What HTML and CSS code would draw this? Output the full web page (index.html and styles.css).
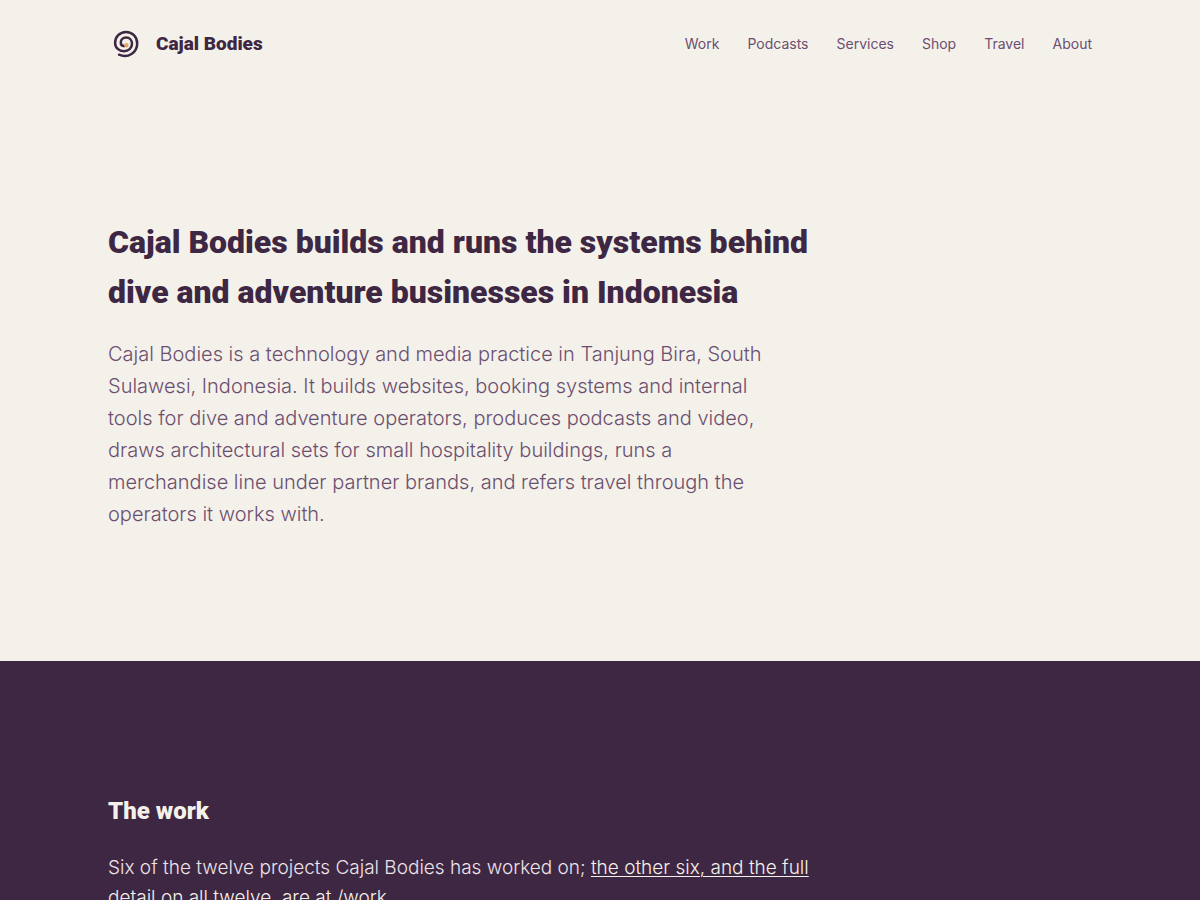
FILE: index.html
```html
<!DOCTYPE html>
<html lang="en">
<head>
  <meta charset="utf-8">
  <meta name="viewport" content="width=device-width, initial-scale=1">
  <title>Cajal Bodies</title>
  <link rel="stylesheet" href="styles.css">
</head>
<body>
  <header class="site-header">
    <a class="brand" href="#">
      <svg class="brand-mark" viewBox="0 0 36 36" aria-hidden="true">
        <path d="M11 29.7C20 33.8 29.2 27.5 29.2 18.4C29.2 11.8 24.2 7 18 7C11.8 7 7.1 11.8 7.1 17.7C7.1 22.9 11.2 26.2 15.8 26.2C20.6 26.2 24 23 24 18.7C24 15 21.5 12.6 18.1 12.6C15 12.6 12.8 14.7 12.8 17.4C12.8 19.5 14.1 21 16 21.1" fill="none" stroke="#3e2743" stroke-width="2.5" stroke-linecap="round"/>
        <circle cx="18.4" cy="20.2" r="2.2" fill="#e9a568"/>
      </svg>
      <span class="brand-name">Cajal Bodies</span>
    </a>
    <nav class="site-nav" aria-label="Main">
      <a href="#">Work</a>
      <a href="#">Podcasts</a>
      <a href="#">Services</a>
      <a href="#">Shop</a>
      <a href="#">Travel</a>
      <a href="#">About</a>
    </nav>
  </header>
  <main>
    <section class="hero">
      <h1>Cajal Bodies builds and runs the systems behind dive and adventure businesses in Indonesia</h1>
      <p>Cajal Bodies is a technology and media practice in Tanjung Bira, South Sulawesi, Indonesia. It builds websites, booking systems and internal tools for dive and adventure operators, produces podcasts and video, draws architectural sets for small hospitality buildings, runs a merchandise line under partner brands, and refers travel through the operators it works with.</p>
    </section>
    <section class="work">
      <h2>The work</h2>
      <p>Six of the twelve projects Cajal Bodies has worked on; <a href="#">the other six, and the full detail on all twelve, are at /work</a>.</p>
    </section>
  </main>
</body>
</html>
```

FILE: styles.css
```css
* {
  box-sizing: border-box;
}

body {
  margin: 0;
  background: #f4f1ea;
  color: #3e2743;
  font-family: Inter, sans-serif;
}

h1,
h2,
p {
  margin: 0;
}

h1,
h2,
.brand-name {
  font-family: Roboto, sans-serif;
  font-weight: 900;
}

.site-header,
.hero,
.work {
  padding-inline: max(24px, 9%);
}

.site-header {
  display: flex;
  align-items: center;
  justify-content: space-between;
  flex-wrap: wrap;
  padding-block: 25px;
}

.brand {
  display: flex;
  align-items: center;
  gap: 12px;
  color: inherit;
  text-decoration: none;
}

.brand-mark {
  width: 36px;
  height: 36px;
}

.brand-name {
  font-size: 19px;
}

.site-nav {
  display: flex;
  flex-wrap: wrap;
  gap: 28px;
}

.site-nav a {
  color: #6b4f70;
  font-size: 14px;
  text-decoration: none;
}

.hero {
  padding-block: 131px;
}

.hero h1 {
  max-width: 740px;
  font-size: 32px;
  line-height: 50px;
}

.hero p {
  max-width: 670px;
  margin-top: 21px;
  color: #6b4f70;
  font-size: 20px;
  font-weight: 300;
  line-height: 32px;
}

.work {
  padding-block: 132px;
  background: #3e2743;
  color: #f4f1ea;
}

.work h2 {
  font-size: 24px;
  line-height: 36px;
}

.work p {
  max-width: 720px;
  margin-top: 24px;
  color: #ede3e8;
  font-size: 19px;
  font-weight: 300;
  line-height: 30px;
}

.work a {
  color: #f4f1ea;
  text-decoration-thickness: 1px;
  text-underline-offset: 2px;
}
```
